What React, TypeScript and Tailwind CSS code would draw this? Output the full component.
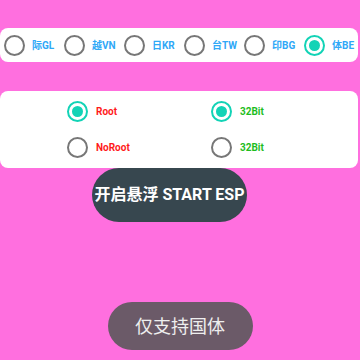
const font = { fontFamily: "Roboto, 'Noto Sans CJK SC', sans-serif" }

function Radio({ checked }: { checked?: boolean }) {
  return (
    <span
      className={`flex h-[21px] w-[21px] shrink-0 items-center justify-center rounded-full border-[2px] ${
        checked ? 'border-[#12d3b6]' : 'border-[#777777]'
      }`}
    >
      {checked && <span className="h-[11px] w-[11px] rounded-full bg-[#12d3b6]" />}
    </span>
  )
}

const regions = [
  { label: '际GL' },
  { label: '越VN' },
  { label: '日KR' },
  { label: '台TW' },
  { label: '印BG' },
  { label: '体BE', checked: true },
]

export default function App() {
  return (
    <div className="flex h-[360px] w-[360px] flex-col items-center overflow-hidden bg-[#ff6fdf]" style={font}>
      <div className="mt-[28px] flex h-[34px] w-[358px] self-start items-center rounded-[8px] bg-white pl-[4px]">
        {regions.map((r) => (
          <div key={r.label} className="flex w-[60px] shrink-0 items-center gap-[7px]">
            <Radio checked={r.checked} />
            <span className="text-[10px] font-bold text-[#2fa8f7]">{r.label}</span>
          </div>
        ))}
      </div>

      <div className="mt-[29px] grid h-[77px] w-[358px] self-start grid-cols-2 content-center gap-y-[15px] rounded-[8px] bg-white">
        <div className="flex items-center gap-[8px] pl-[67px]">
          <Radio checked />
          <span className="text-[10px] font-bold text-[#ff1a1a]">Root</span>
        </div>
        <div className="flex items-center gap-[8px] pl-[32px]">
          <Radio checked />
          <span className="text-[10px] font-bold text-[#1ebd1e]">32Bit</span>
        </div>
        <div className="flex items-center gap-[8px] pl-[67px]">
          <Radio />
          <span className="text-[10px] font-bold text-[#ff1a1a]">NoRoot</span>
        </div>
        <div className="flex items-center gap-[8px] pl-[32px]">
          <Radio />
          <span className="text-[10px] font-bold text-[#1ebd1e]">32Bit</span>
        </div>
      </div>

      <button className="ml-[92px] flex h-[54px] w-[155px] self-start items-center justify-center rounded-full bg-[#37474f] text-[16px] font-bold whitespace-nowrap text-white">
        开启悬浮 START ESP
      </button>

      <button className="mt-[80px] flex h-[48px] w-[145px] items-center justify-center rounded-full bg-[#6b5a68] text-[18px] text-[#eeeeee]">
        仅支持国体
      </button>
    </div>
  )
}
